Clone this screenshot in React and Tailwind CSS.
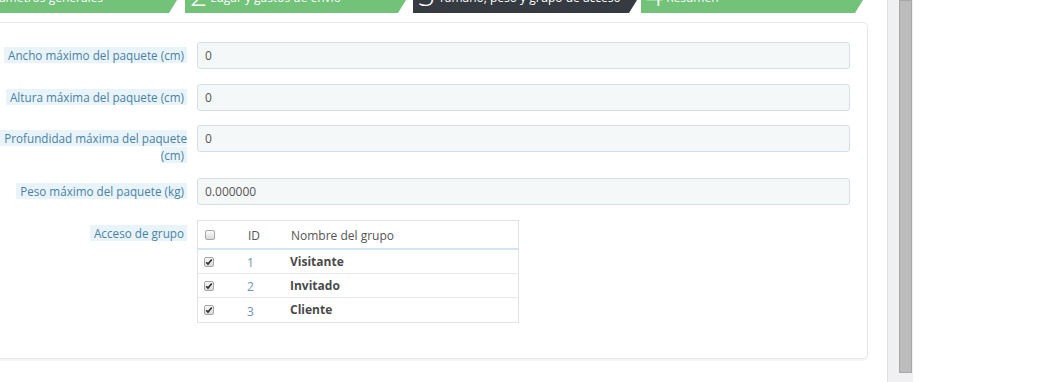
import React from 'react';

const tabs = [
  { n: '1', label: 'Parámetros generales', w: 'w-[222px]', ml: '', bg: 'bg-[#72c279]' },
  { n: '2', label: 'Lugar y gastos de envío', w: 'w-[221px]', ml: 'ml-[8px]', bg: 'bg-[#72c279]' },
  { n: '3', label: 'Tamaño, peso y grupo de acceso', w: 'w-[224px]', ml: 'ml-[7px]', bg: 'bg-[#363a41]' },
  { n: '4', label: 'Resumen', w: 'w-[222px]', ml: 'ml-[4px]', bg: 'bg-[#72c279]' },
];

const fields = [
  { label: 'Ancho máximo del paquete (cm)', value: '0', mb: 'mb-[15px]' },
  { label: 'Altura máxima del paquete (cm)', value: '0', mb: 'mb-[14px]' },
  { label: 'Profundidad máxima del paquete (cm)', value: '0', mb: 'mb-[14px]' },
  { label: 'Peso máximo del paquete (kg)', value: '0.000000', mb: 'mb-[15px]' },
];

const groups = [
  { id: 1, name: 'Visitante' },
  { id: 2, name: 'Invitado' },
  { id: 3, name: 'Cliente' },
];

function Check({ checked }) {
  return (
    <span className="flex h-[10px] w-[10px] items-center justify-center rounded-[2px] border border-[#a6a6a6] bg-gradient-to-b from-[#fbfbfb] to-[#d9d9d9]">
      {checked && (
        <svg width="8" height="8" viewBox="0 0 8 8">
          <path d="M1.2 4.2 L3 6 L6.8 1.6" fill="none" stroke="#2b2b2b" strokeWidth="1.6" />
        </svg>
      )}
    </span>
  );
}

function Label({ children }) {
  return (
    <div className="w-[191px] shrink-0 pt-[5px] text-right text-[11.7px] leading-[17px]">
      <span className="bg-[#e9f4fa] pl-[4px] pr-[3px] text-[#4a82a6]">{children}</span>
    </div>
  );
}

export default function App() {
  return (
    <div className="flex h-[382px] w-[1042px] overflow-hidden bg-white font-['Open_Sans',sans-serif]">
      <div className="w-[887px] shrink-0">
        {/* wizard steps, scrolled so only their bottom shows */}
        <div className="-ml-[45px] flex h-[13px] overflow-hidden">
          {tabs.map((t) => (
            <div
              key={t.n}
              className={`flex h-[13px] shrink-0 items-end pl-[5px] text-white [clip-path:polygon(0_0,100%_0,calc(100%_-_8px)_100%,0_100%)] ${t.w} ${t.ml} ${t.bg}`}
            >
              <span className="mb-[3px] text-[30px] font-light leading-[30px]">{t.n}</span>
              <span className="mb-[9px] ml-[3px] whitespace-nowrap text-[12px] leading-[12px]">{t.label}</span>
            </div>
          ))}
        </div>

        <div className="-ml-[5px] mt-[9px] h-[337px] w-[873px] rounded-[5px] border border-[#e6e6e6] pr-[17px] pt-[19px] shadow-[0_2px_0_rgba(0,0,0,0.04)]">
          {fields.map((f) => (
            <div key={f.label} className={`flex gap-[10px] ${f.mb}`}>
              <Label>{f.label}</Label>
              <input
                readOnly
                value={f.value}
                className="h-[27px] flex-1 rounded-[3px] border border-[#d5dfe3] bg-[#f5f8f9] px-[7px] text-[12px] text-[#555] outline-none"
              />
            </div>
          ))}

          <div className="flex gap-[10px]">
            <Label>Acceso de grupo</Label>
            <div className="w-[322px] border border-[#e1e4e6] text-[12px] text-[#555]">
              <div className="grid h-[29px] grid-cols-[42px_43px_1fr] items-center border-b-2 border-[#cfe7f3]">
                <div className="pl-[7px] pt-[1px]">
                  <Check />
                </div>
                <div className="pl-[8px] pt-[2px]">ID</div>
                <div className="pl-[8px] pt-[2px]">Nombre del grupo</div>
              </div>
              {groups.map((g, i) => (
                <div
                  key={g.id}
                  className={`grid h-[24px] grid-cols-[42px_43px_1fr] items-center ${i < groups.length - 1 ? 'border-b border-[#eaeaea]' : ''}`}
                >
                  <div className="pl-[6px]">
                    <Check checked />
                  </div>
                  <div className="pl-[7px] pt-[3px] text-[#6d93ad]">{g.id}</div>
                  <div className="pl-[7px] font-bold text-[#4a4a4a]">{g.name}</div>
                </div>
              ))}
            </div>
          </div>
        </div>
      </div>

      {/* side scroll track */}
      <div className="h-[382px] w-[26px] shrink-0 border-l border-[#dedfe1] bg-[#eef0f2]">
        <div className="ml-[11px] h-[373px] w-[13px] border border-[#a8a8a8] bg-[#bcbcbc]" />
      </div>
      <div className="flex-1 bg-white" />
    </div>
  );
}
